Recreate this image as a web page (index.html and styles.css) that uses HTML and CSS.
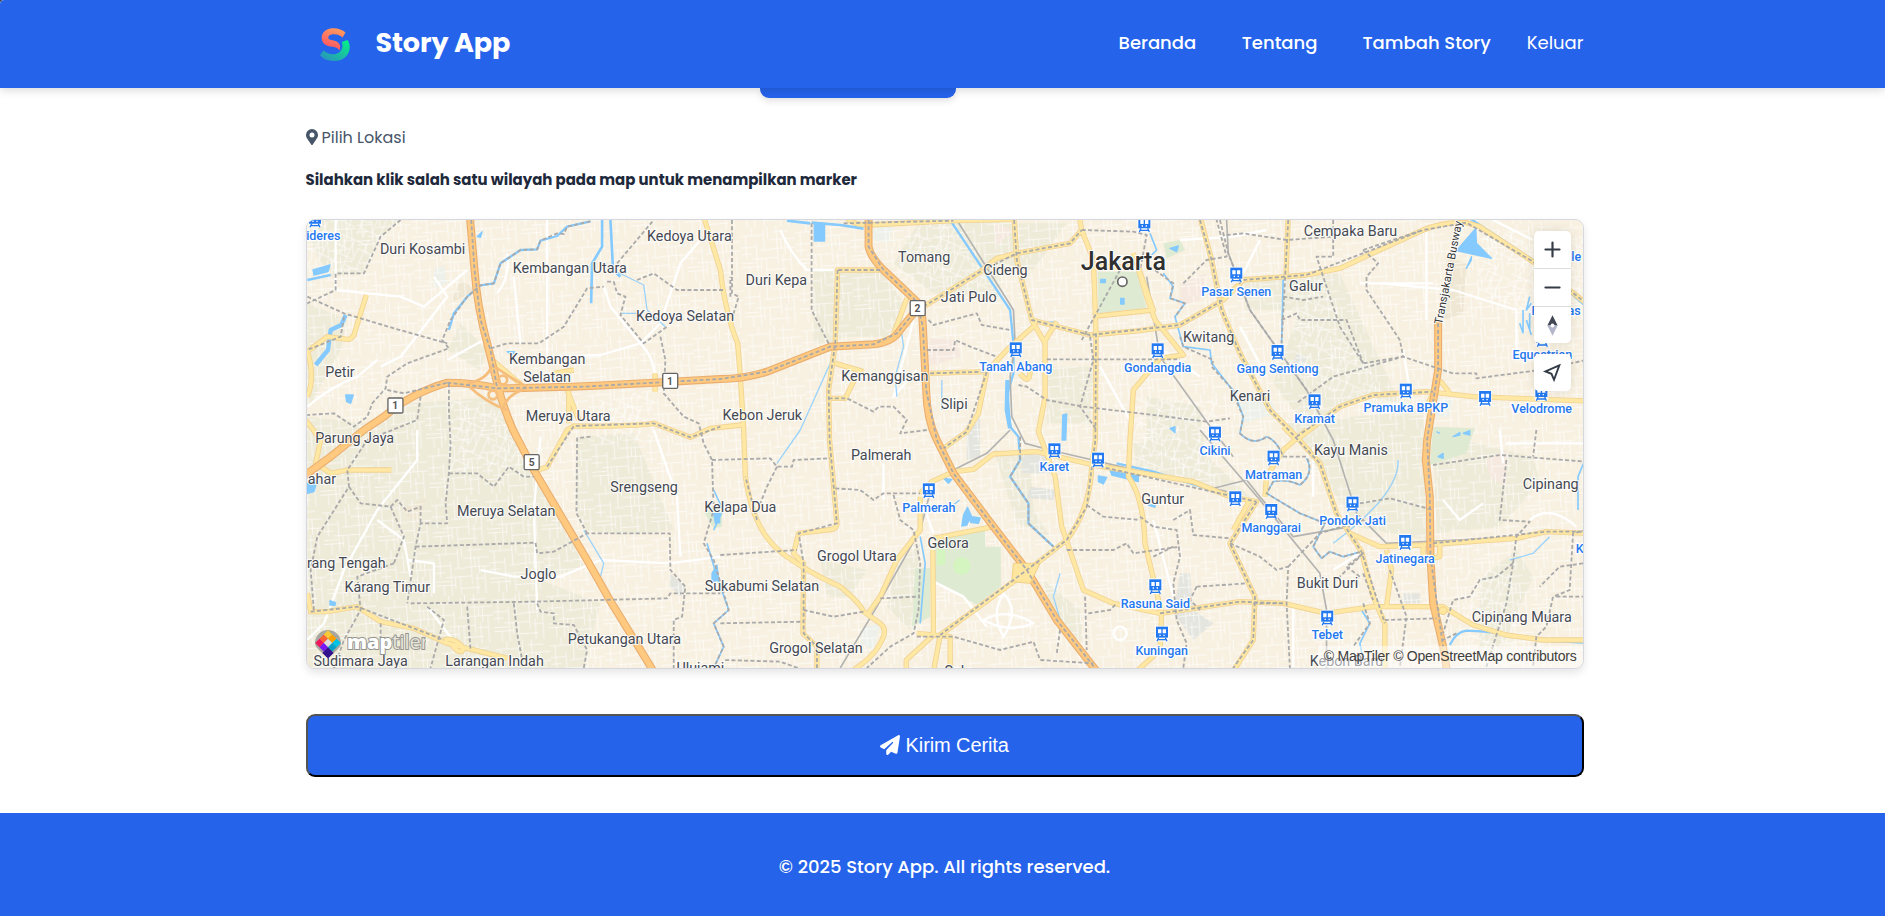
FILE: index.html
```html
<!DOCTYPE html>
<html lang="id">
<head>
<meta charset="utf-8">
<title>Story App</title>
<link rel="stylesheet" href="styles.css">
</head>
<body>
<header class="header">
  <div class="container header-inner">
    <a class="brand">
      <svg class="brand-logo" viewBox="0 0 30 33">
        <defs>
          <linearGradient id="warm" x1="1" y1="0" x2=".6" y2="1"><stop offset="0" stop-color="#ffa35c"/><stop offset=".6" stop-color="#ff7562"/><stop offset="1" stop-color="#ff5660"/></linearGradient>
          <linearGradient id="cool" x1="0" y1="1" x2="1" y2="0"><stop offset="0" stop-color="#2a8cc4"/><stop offset=".6" stop-color="#16c79c"/><stop offset="1" stop-color="#00fa85"/></linearGradient>
        </defs>
        <path d="M25.500 4.500C20-1 6-2 2.200 6.500C0 14 5 17.500 11 18.500C16 19.200 18 20 19.500 22.500C22 15 17 13 11 12C6 10.500 8.500 6.300 13 6.200C17 6 20 7 22.500 9.500Z" fill="url(#warm)"/>
        <path d="M27.500 12C33 20 28 33 14 33C7 33 2 30 0 27L3.500 22.500C9 28 21 28 22.300 19C22.600 17 22.300 15 21.500 14Z" fill="url(#cool)"/>
      </svg>
      <span class="brand-name">Story App</span>
    </a>
    <nav class="nav">
      <a class="nav-link nav-beranda">Beranda</a>
      <a class="nav-link nav-tentang">Tentang</a>
      <a class="nav-link nav-tambah">Tambah Story</a>
      <a class="nav-link nav-logout">Keluar</a>
    </nav>
  </div>
</header>
<main class="container main">
  <div class="camera-button"></div>
  <div class="field-label">
    <svg class="pin-icon" viewBox="0 0 384 512"><path fill="currentColor" d="M172 502C27 291 0 270 0 192a192 192 0 1 1 384 0c0 78-27 99-172 310-9 14-31 14-40 0zm20-230a80 80 0 1 0 0-160 80 80 0 0 0 0 160z"/></svg>
    <span>Pilih Lokasi</span>
  </div>
  <p class="hint">Silahkan klik salah satu wilayah pada map untuk menampilkan marker</p>
  <div class="map">
    <svg class="map-canvas" viewBox="19 30 3831 1344" preserveAspectRatio="none">
      <defs>
        <pattern id="streets" width="210" height="190" patternUnits="userSpaceOnUse" patternTransform="rotate(-4) scale(.78)">
          <path class="street" d="M0 30H90M90 12V88M20 30V120M0 75H60M60 60V190M40 120H140M110 50H210M140 0V150M170 50V110M115 85H210M190 85V190M0 150H75M95 120V190M95 165H170M30 150V190M125 20H185M160 110V190M0 100H40M75 88H115M0 135H55M150 130H188M105 0V45M45 0V30M75 120V165M155 50V85"/>
        </pattern>
        <pattern id="streets-b" width="170" height="150" patternUnits="userSpaceOnUse" patternTransform="rotate(24) scale(.8)">
          <path class="street" d="M0 20H110M30 0V90M60 20V150M0 60H60M85 45H170M110 0V120M85 45V90M0 90H85M140 45V150M60 120H170M20 90V150M0 125H40M85 120V150"/>
        </pattern>
        <g id="train">
          <rect x="-21" y="-23" width="42" height="48" rx="6" fill="#fff" opacity=".75"/>
          <path d="M-18-20H18V13H-18Z" fill="#2379f1"/><path d="M-12-12H-2V0H-12ZM2-12H12V0H2Z" fill="#fff"/><path d="M-8 6h4M4 6h4" stroke="#fff" stroke-width="4"/><path d="M-10 13-15 24M10 13 15 24M-13 19H13" stroke="#2379f1" stroke-width="4"/>
        </g>
        <g id="roads-major">
          <path d="M508 20L522 180Q530 290 560 400L590 520Q610 600 640 665L700 780L860 1050L925 1165L1060 1385"/>
          <path d="M10 798L90 740L190 660L250 620Q330 550 440 518Q520 518 590 535Q800 533 1060 518L1260 507Q1330 507 1400 485L1590 410L1720 403Q1780 395 1800 360L1850 298"/>
          <path d="M1705 20V110Q1710 140 1750 180L1850 275Q1868 300 1868 350L1878 540Q1880 630 1910 690L1960 790L2080 950L2180 1080L2270 1230L2390 1384"/>
          <path d="M3415 330V480L3382 690L3378 750L3390 860L3392 1040L3400 1180L3430 1310L3442 1384"/>
        </g>
        <g id="roads-minor">
          <path d="M197 255L160 375Q150 390 140 388L80 380L20 425Q45 500 20 560M15 630L60 690L45 760L90 790L140 780H272"/>
          <path d="M1210 20L1260 180Q1275 310 1312 400L1320 500L1330 660L1335 800Q1350 890 1370 930Q1400 1000 1460 1040Q1530 1090 1620 1130Q1680 1180 1690 1205L1740 1240Q1765 1260 1740 1300Q1720 1340 1660 1380"/>
          <path d="M575 450L660 522M800 540L835 630M805 540V640M1064 490V545M700 785L740 770L800 660L820 648Q990 650 1060 640L1170 682L1230 655L1325 645M760 490L820 480"/>
          <path d="M20 1150L30 1205H80L170 1190L240 1235L340 1255L440 1300L620 1345M430 1290Q460 1280 490 1315Q480 1340 450 1300"/>
          <path d="M1740 180H1612L1605 400L1585 540L1588 690L1610 940Q1610 960 1580 960L1495 970L1480 1030L1510 1060L1508 1270L1550 1310V1384"/>
          <path d="M1640 25Q1660 45 1710 45L1960 32L2150 28M1870 290L2040 185L2090 145L2150 130L2310 100L2345 60L2338 20M2345 60L2380 150L2388 370L2386 690L2375 770Q2370 900 2300 990L2140 1115L1920 1275L1900 1384"/>
          <path d="M2142 20L2150 150L2195 330L2235 400V560L2215 665L2265 800L2285 950L2350 1140L2440 1180L2580 1210L2820 1175L2950 1180L3080 1210L3220 1190H3430L3520 1245L3620 1275L3730 1290H3860"/>
          <path d="M2195 330L2370 375L2520 362L2640 345L2770 270L2830 210L3020 195L3120 175L3370 60Q3430 35 3500 38L3540 50L3700 155L3860 280"/>
          <path d="M2700 20L2735 150L2765 300L2820 430L2910 600L2990 680L3060 760L3110 910L3185 1025L3220 1160L3255 1240V1384M2965 20L2958 200"/>
          <path d="M2390 318L2560 300L2500 130M2500 130L2540 260L2565 330L2650 435L2580 445L2500 540L2490 690L2485 800Q2530 860 2535 1000L2585 1210L2580 1320L2510 1384M2390 170H2500"/>
          <path d="M2990 690L3120 590L3220 555L3380 545L3520 560L3860 573M3420 510L3450 550M3380 590L3400 550"/>
          <path d="M1860 860V960L1790 1050L1740 1160L1700 1215M1860 850L1895 815L1960 785L2020 778L2080 732L2210 725L2380 765L2680 815L2790 860L2870 875L2790 1000L2865 1160L2860 1290L2800 1384M2850 870L2800 960M2895 860L2900 800L2950 720L3020 660M2950 650L2990 690"/>
          <path d="M1900 985L2080 950M1898 1020L1900 1275L1818 1350V1384M1850 1270L1950 1280V1384M1890 490L2060 485L2120 420L2205 345M2060 485L2035 610L2000 665L1930 715M1820 265L1800 320L1780 370M1605 460L1690 485M1665 505L1635 565H1585M2230 400L2270 335M2160 490Q2190 530 2190 480"/>
          <path d="M3150 970L3240 1010L3370 1005L3650 985L3740 965L3860 970M3260 1020L3275 1080L3260 1190M3370 1010V1050L3420 1040V1000"/>
        </g>
      </defs>
      <rect x="0" y="0" width="3880" height="1400" fill="#f8f1e2"/>
      <g fill="#eeebd9">
        <path d="M20 30H300L240 80L190 190L90 200L40 120ZM20 280L140 330L120 420L20 600ZM440 420L480 340L560 420L540 480ZM1540 180H1650V370L1600 400H1540ZM2020 40H2300L2200 180L2050 150ZM1620 180H1740L1820 290L1760 380H1620ZM1860 30H2100V260L1900 250L1780 160ZM2240 470H2380L2370 640H2240ZM2820 200L3120 190L3300 580L3200 560L3010 640L2920 520L3000 300L2840 300Z"/>
        <path d="M20 620L190 640L330 580L590 560L690 780L770 900L850 1070L720 1110L900 1180L850 1374H20ZM830 680L1000 670L1120 960L970 975L860 960L825 900ZM2960 640L3370 600L3380 990L3170 950L3050 770ZM3400 670L3700 740L3720 820L3600 950L3410 970ZM2080 720L2190 730L2200 900L2250 980L2150 940ZM2500 700L2680 700L2850 860L2700 830L2510 780ZM2540 560L2700 590L2720 780L2540 780ZM1560 1050L1700 1080L1650 1160H1580ZM1860 1000L1790 1070L1760 1190L1830 1260ZM2230 1110L2340 1200L2350 1300L2260 1240ZM3540 1110L3650 1020L3700 1100L3600 1330H3540Z"/>
      </g>
      <g fill="#efe7d3"><path d="M480 210L530 240L450 280ZM3440 140L3500 160L3490 310L3430 330ZM300 900L380 860L350 940Z"/></g>
      <g fill="#f6e9df"><path d="M1890 385L1970 390L1980 440L1880 470ZM2080 40L2140 60L2090 110ZM2640 220L2720 190L2700 270L2640 290ZM3560 750L3620 720L3620 830L3570 800Z"/></g>
      <g fill="#e5e5df"><path d="M2000 640L2040 620L2040 740L2000 750ZM2165 730L2250 720L2250 790L2165 790ZM2190 830L2270 840L2260 870L2180 865ZM2640 1090H2670L2680 1200L2740 1240L2680 1290L2620 1210ZM3310 1150H3360V1180H3310ZM1108 1090L1155 1130L1140 1160L1110 1130ZM2990 430L3020 440L3010 470L2980 460Z"/></g>
      <g fill="#edf1e9"><path d="M400 180L430 165L440 220L400 235ZM1715 50L1780 48L1765 97L1715 90ZM1690 1250L1740 1240L1720 1320L1680 1300ZM2820 580L2910 560L2930 610L2830 640ZM3390 565L3460 570L3450 620H3390Z"/></g>
      <rect x="0" y="0" width="3880" height="1400" fill="url(#streets)"/>
      <path fill="url(#streets-b)" d="M20 30H300L180 190H20ZM450 570L600 600L690 780L440 790ZM1860 30H1960L2090 240L1780 200ZM2950 200H3060L3300 640L3000 500ZM2500 560H2750V800H2500ZM3550 60H3850V330L3530 290ZM900 560L1060 540V700L860 700ZM3500 1080H3650V1370H3500Z"/>
      <g class="green">
        <path d="M2392 185H2510L2540 295L2395 310ZM3400 650L3525 655L3500 730L3390 765ZM2590 100L2640 90L2655 120L2600 145ZM1905 990L2055 960V1010H2102V1130L2030 1185L1905 1115ZM1845 1075H1890V1220L1835 1250ZM1210 905L1265 890V950L1240 955Z"/>
      </g>
      <circle cx="1985" cy="1068" r="26" fill="#d4f5c0"/><path d="M1910 1018H1935V1065H1910Z" fill="#d4f5c0"/>
      <g class="local">
        <path d="M105 30V240L300 260L370 290L500 180M400 200L440 260L300 440L240 470M440 450L540 395L580 410M20 590Q90 530 170 500L230 450M640 200L660 400M740 30V440M740 440L900 435L1020 400L1080 340L1140 160L1200 90M1020 400Q1060 440 1064 500M910 230L930 290L1020 400M590 250Q630 200 620 130"/>
        <path d="M350 660V750L230 900L130 1080L70 1240L20 1290M230 930L310 990L330 1100M540 1080L640 1100L780 1100L900 1050L1110 1060L1260 1040M720 680L700 900L710 1200M1060 660L1130 860L1140 1040M320 1050L400 1060V1150M380 1190L480 1320M1440 60Q1470 130 1520 180H1600M1840 330L1780 560L1850 480M1750 760V870M1860 860L1900 970"/>
        <path d="M1900 1115L1990 1160L2060 1250M2050 1230Q2120 1190 2200 1240Q2120 1270 2050 1230M2110 1150Q2160 1200 2110 1280Q2070 1210 2110 1150M2440 1270a20 20 0 1 0 40 0a20 20 0 1 0-40 0M2640 90L2800 80L2900 60M2830 190L2880 90M3240 220L3460 240L3650 300V420M3310 420L3330 540M3180 220H3400M3380 60V330M3600 660L3610 760M2400 470L2500 650M2560 400L2700 500M2820 350L2900 500M3580 30L3700 90M3620 700H3850M3690 930Q3750 880 3830 950M3040 710V860M2560 930L2620 1160M2980 1180V1370M3100 1080L3180 1030M3430 870L3480 930L3550 880"/>
      </g>
      <g class="water-line">
        <path d="M870 34L800 50L770 78L720 92L710 118L660 120L600 160L580 220L540 226L500 260L460 310L445 360M20 210L90 195" />
        <path d="M905 30V110L875 160L872 280M930 30L938 180L960 200M1460 32L1530 40M1534 38L1620 45L1690 56" stroke-width="8"/>
        <path d="M938 180L1030 225L1040 300L1095 350M960 310H1010M850 960L910 1060L900 1100M1590 460L1500 660L1430 760M1820 265L1800 340L1810 410L1785 500L1790 560M1925 510V600M3630 1050L3700 1030L3750 980M2280 1090L2260 1160L2280 1230M2270 335L2200 340M3100 1000Q3300 850 3295 750" class="creek"/>
        <path d="M135 315L122 345L90 360L82 420L45 465" class="canal"/>
        <path d="M1950 30L2130 300L2140 400L2140 490L2122 550L2130 650L2155 680L2160 750L2130 800L2185 880V940L2260 1010"/>
        <path d="M2122 510L2120 600L2130 655" class="canal"/>
        <path d="M2550 70L2570 120L2540 150M2590 190L2620 230L2610 265L2655 280L2625 320L2650 410L2730 420L2735 460L2790 530L2800 540L2830 620L2820 670Q2860 710 2900 680Q2930 690 2950 740M3020 745Q3045 790 3000 825Q2960 805 2920 815L2900 850L3000 910L3075 940L3040 1010L3065 1045L3090 1025L3130 1040L3185 1025M3185 1200L3210 1240L3180 1300L3190 1350M2950 200L2945 400M1240 840L1268 900L1240 960M1220 1000L1250 1100L1285 1200L1240 1240L1270 1310L1240 1374M1860 980L1875 1060L1860 1240M3860 740L3835 800V900" class="stream"/>
        <path d="M3450 1305Q3470 1265 3500 1262Q3590 1265 3660 1280L3730 1292L3860 1298M3510 25L3700 150L3860 290M2450 760L2560 785L2780 855"/>
        <path d="M3690 260L3680 300L3695 280M3670 300V370M3680 330L3695 375M3690 310V360M3660 340L3670 370" class="stream"/>
      </g>
      <g class="water">
        <path d="M1542 40H1573V93H1542ZM37 180L88 165L82 185L40 195ZM135 555H158L150 580L138 575ZM530 80L545 65L540 82ZM20 820L50 810L40 845L20 850ZM88 1172L105 1178L103 1186L88 1185ZM620 425H642L635 435ZM1235 1090L1250 1065L1255 1110L1235 1115ZM1240 910H1258V938L1245 940Z"/>
        <path d="M2002 892L2015 920L2040 924L2035 940L2012 938L2010 925L2000 945L1985 948L1990 915ZM1930 805L1955 808L1945 820ZM1960 885L1978 870M2430 780L2515 798V815L2435 795ZM2395 798L2420 802L2410 822L2395 815ZM2288 615L2300 612L2297 690H2286ZM2402 208H2416V218H2402ZM2462 265H2472V282H2462ZM2610 115L2635 108L2630 125ZM3528 55L3530 100L3575 145L3470 122ZM3500 175L3515 140V150ZM2610 655L2625 650V668ZM3460 680L3480 668V675ZM3490 670L3510 662V675ZM3410 665L3420 670M3415 740L3430 730V745ZM2545 885H2565V892Z"/>
      </g>
      <g class="rail">
        <path d="M1970 30L2140 300L2145 400L2130 500L2135 620L2175 700L2250 720L2780 845M2700 660L2880 870L3060 1090L3080 1200V1374M2130 660L2060 730L1900 810L1860 960L1730 1190L1620 1374M2780 30L2785 130L2850 300L3020 540L3100 690L3170 910L3260 1000L3650 982M2540 200L2580 440L2720 635L2800 740M2720 840L2840 810L2880 860L2980 980L3150 950"/>
      </g>
      <use href="#roads-minor" class="minor-case"/><use href="#roads-minor" class="minor-fill"/>
      <use href="#roads-major" class="major-case"/><use href="#roads-major" class="major-fill"/>
      <g class="ramps"><path d="M500 520Q560 510 575 465M500 525Q560 580 620 600M575 465Q640 510 680 530M605 600Q620 550 680 535"/><circle cx="607" cy="510" r="13"/><circle cx="577" cy="555" r="13"/></g>
      <path d="M2140 1060H2220L2190 1120L2135 1115ZM3430 1190a12 12 0 1 0 .1 0" fill="#ffe69f" stroke="#f0cf84" stroke-width="3"/>
      <g class="boundary">
        <path d="M300 30L240 80L190 190H105V240L20 280M20 260L130 310L280 355L440 400M870 34L800 50L790 72L770 70L720 92L710 118L660 120L600 160L580 220L540 226L500 260L450 330L425 390L445 415L320 460L260 500L255 535L215 580L200 620L160 650L100 610L20 615M130 320L120 380L20 420"/>
        <path d="M260 540L310 550L440 518M445 520V600L450 700L445 790L435 880L440 940H360L345 1010L320 1180M360 560L350 630L200 690L140 780L145 830L50 980L30 1080L40 1205M145 830L180 880L270 890L290 870L320 905L360 890V940M270 890L310 980L280 1060M445 790L530 790L580 830L625 770L670 800H700M570 415L620 400H715L790 350L860 235L910 230M920 215L940 215L950 250L975 260L960 315L1030 400L1100 350M950 160L1060 30M1010 210L1060 190L1130 240L1270 240M1290 260V200M1080 380L1095 450L1090 550L1150 620L1195 640L1210 700L1235 750L1240 900L1210 1000L1240 1050L1285 1200L1240 1240L1270 1310L1240 1374"/>
        <path d="M345 1010L705 998L710 1030L760 1025L860 970H1108L1110 1080L1155 1130L1145 1220L1120 1230V1374M330 1180L700 1175L900 1170L1100 1165L1110 1150H1260M870 680L830 685L828 910L860 970M380 1190L430 1230L390 1374M500 1190L510 1320M640 1180L650 1270L665 1350M710 1180L720 1205L760 1210V1240L820 1245L860 1320L850 1374M280 1060L170 1100L180 1200L130 1290L100 1374M240 1240V1300"/>
        <path d="M1295 30V250L1315 260L1300 310H1270M1534 40V300L1590 410M1235 750L1410 745L1430 770H1475L1480 750L1590 745M1430 770L1400 830L1380 880M1260 1035L1490 1020M1605 835L1680 840L1720 870L1750 850L1860 850M1510 1200L1600 1220L1690 1205M1260 1240L1510 1235M1510 1380L1440 1355L1270 1350M1585 565H1640L1720 605L1735 590L1780 590L1820 630L1800 670L1880 660M1885 330L1900 345L2030 310L2045 345L2130 360M1880 420H1960L1965 390L2010 410L2090 440M1780 855L1800 930L1840 960L1860 1060L1855 1200L1840 1270L1770 1310L1700 1374M1740 1165L1850 1160M1850 1280L1960 1280L2100 1320L2200 1295L2220 1350L2380 1360M2280 1260L2270 1330M2355 1160L2360 1320M2365 1210L2430 1200L2450 1180M2155 525L2180 530L2240 570L2350 590L2520 610M2370 380L2380 450L2340 590L2390 660M2240 448H2640M2360 885L2410 920L2520 930M2300 1020H2440L2480 1000L2500 1030L2640 1010M2460 180L2345 390M2345 60L2500 65L2540 75L2520 180M2650 220L2720 150L2780 140L2750 30M2780 75L2830 70L2960 90L3100 80M2550 170L2620 220L2610 265L2655 280L2625 320"/>
        <path d="M2160 680V750L2130 800L2185 880V940L2260 1010M2640 380L2650 410L2740 450L2735 470L2790 530L2830 620L2820 670Q2860 710 2900 680Q2930 690 2950 740H3020Q3045 790 3000 825Q2960 805 2920 815L2900 850L3000 910L3075 940L3040 1010L3065 1045L3090 1025L3130 1040L3185 1025M3190 1180L3210 1240L3160 1310"/>
        <path d="M2760 30L2785 130L2850 300L3020 540M3100 30V140H3050L3120 350L3190 460L3310 440L3460 490L3530 490V505L3720 480L3860 450M2950 260L3010 270L3070 260M2945 330L2990 310L3000 330H3140L3190 460M3190 120L3235 160L3200 200V240L3300 390L3310 440L3100 500L2990 580M3190 120L3370 60M2520 610L2720 635L2790 625M3180 880L3270 865L3400 900M3400 765L3600 735L3860 755M3710 660L3700 740M3620 750L3600 930L3690 935L3650 980L3640 1060L3620 1180L3560 1370M3860 960L3820 970L3810 1140L3760 1160L3740 1250L3710 1280L3700 1370M3770 1160H3850M3640 1060L3590 1100L3540 1110L3510 1160L3460 1170L3430 1270M3850 1060L3780 1070L3720 1130"/>
        <path d="M2520 920L2560 950L2630 960L2640 1040L2620 1120L2630 1230L2660 1300L2650 1374M2620 930L2670 900L2680 975L2790 985M2560 1040L2620 1010M2790 1000L2880 1040L2930 1080L2965 1070L2960 1180L2970 1374M2965 1070L3060 970L3190 930M2690 1130L2840 1120M2690 1130L2670 1170L2700 1200M2860 1180H2950M3180 1100L3140 1070L3190 1030L3120 1100M3190 1090L3220 1170M3270 1080L3320 1220L3300 1374M3255 1230L3410 1225M3470 1270L3430 1290"/>
        <path d="M512 30L522 180L540 330L570 420L590 535L850 530L1060 518L1260 507L1400 485L1590 410L1720 403L1790 370L1850 298M440 518L590 535M1705 30V110L1750 180L1850 275L1868 350L1878 540L1910 690L1960 790L2080 950L2180 1080L2270 1230L2385 1374M1370 930L1335 800M1612 180L1605 400L1585 540L1588 690L1610 940L1495 970L1510 1060V1270L1550 1310V1374M1740 180H1612M1630 40L1960 32M1870 290L2040 185L2150 130L2310 100L2345 60M2142 30L2150 150L2195 330L2370 375L2640 345L2770 270M2388 370L2386 690L2360 890L2300 990L1920 1275M1890 490L2060 485L2000 665L1930 715M2700 30L2735 150L2765 300L2820 430L2910 600L3060 760L3110 910L3185 1025L3255 1240M2830 210L3020 195L3370 60L3500 38L3700 155L3860 280M3415 340V480L3382 690L3390 860L3392 1040L3430 1310M2990 680L3120 590L3220 555L3400 545M2965 30L2945 400M740 770L820 648L1060 640L1170 682L1260 650M2870 875L2790 1000L2865 1160L2860 1290L2800 1374M30 1205L170 1190L340 1255L430 1290M2380 765L2870 875M3400 1000L3740 965H3860M2580 1210L2820 1175L2950 1180"/>
      </g>
      <g class="shield">
        <rect x="262" y="564" width="45" height="45" rx="4"/><rect x="1087" y="490" width="45" height="45" rx="4"/><rect x="671" y="734" width="45" height="45" rx="4"/><rect x="1830" y="272" width="45" height="45" rx="4"/>
      </g>
      <g class="shield-num"><text x="284" y="598">1</text><text x="1109" y="524">1</text><text x="694" y="768">5</text><text x="1852" y="306">2</text></g>
      <g class="place">
        <text x="366" y="131">Duri Kosambi</text><text x="808" y="188">Kembangan Utara</text><text x="1167" y="94">Kedoya Utara</text><text x="1154" y="334">Kedoya Selatan</text><text x="740" y="463">Kembangan</text><text x="740" y="516">Selatan</text><text x="118" y="501">Petir</text><text x="803" y="634">Meruya Utara</text><text x="162" y="700">Parung Jaya</text><text x="64" y="823">ahar</text><text x="617" y="919">Meruya Selatan</text><text x="1031" y="845">Srengseng</text><text x="1320" y="905">Kelapa Dua</text><text x="137" y="1073">rang Tengah</text><text x="260" y="1146">Karang Timur</text><text x="714" y="1108">Joglo</text><text x="1385" y="1143">Sukabumi Selatan</text><text x="972" y="1303">Petukangan Utara</text><text x="180" y="1368">Sudimara Jaya</text><text x="582" y="1368">Larangan Indah</text><text x="1200" y="1389">Ulujami</text>
        <text x="1872" y="156">Tomang</text><text x="1428" y="225">Duri Kepa</text><text x="2116" y="196">Cideng</text><text x="2006" y="276">Jati Pulo</text><text x="1754" y="512">Kemanggisan</text><text x="1962" y="597">Slipi</text><text x="1386" y="631">Kebon Jeruk</text><text x="1743" y="750">Palmerah</text><text x="1944" y="1013">Gelora</text><text x="1670" y="1053">Grogol Utara</text><text x="1547" y="1328">Grogol Selatan</text><text x="1975" y="1399">Selo</text>
        <text x="3152" y="78">Cempaka Baru</text><text x="3018" y="242">Galur</text><text x="2726" y="395">Kwitang</text><text x="2850" y="572">Kenari</text><text x="3153" y="735">Kayu Manis</text><text x="3753" y="838">Cipinang</text><text x="2588" y="881">Guntur</text><text x="3083" y="1134">Bukit Duri</text><text x="3666" y="1236">Cipinang Muara</text><text x="3140" y="1368">Kebon Baru</text>
      </g>
      <text class="road-name" transform="translate(3427 344) rotate(-79)">Transjakarta Busway Koridor</text>
      <g>
        <use href="#train" x="43" y="28"/><use href="#train" x="2147" y="417"/><use href="#train" x="2263" y="720"/><use href="#train" x="2394" y="748"/><use href="#train" x="1886" y="840"/><use href="#train" x="2573" y="420"/><use href="#train" x="2809" y="193"/><use href="#train" x="2933" y="425"/><use href="#train" x="3044" y="573"/><use href="#train" x="3318" y="541"/><use href="#train" x="3556" y="563"/><use href="#train" x="3725" y="548"/><use href="#train" x="3728" y="386"/><use href="#train" x="2745" y="670"/><use href="#train" x="2921" y="742"/><use href="#train" x="2806" y="864"/><use href="#train" x="2914" y="902"/><use href="#train" x="3158" y="880"/><use href="#train" x="3316" y="995"/><use href="#train" x="2566" y="1128"/><use href="#train" x="2586" y="1270"/><use href="#train" x="3082" y="1222"/><use href="#train" x="2533" y="42"/>
      </g>
      <g class="station">
        <text x="68" y="90">ideres</text><text x="2147" y="482">Tanah Abang</text><text x="2263" y="783">Karet</text><text x="1886" y="905">Palmerah</text><text x="2573" y="486">Gondangdia</text><text x="2809" y="258">Pasar Senen</text><text x="2933" y="490">Gang Sentiong</text><text x="3044" y="638">Kramat</text><text x="3318" y="607">Pramuka BPKP</text><text x="3726" y="608">Velodrome</text><text x="3728" y="447">Equestrian</text><text x="2745" y="735">Cikini</text><text x="2921" y="806">Matraman</text><text x="2914" y="966">Manggarai</text><text x="3158" y="945">Pondok Jati</text><text x="3316" y="1060">Jatinegara</text><text x="2566" y="1193">Rasuna Said</text><text x="2585" y="1334">Kuningan</text><text x="3082" y="1287">Tebet</text><text x="3840" y="1029">K</text><text x="3819" y="152">ule</text><text x="3769" y="315">Pulomas</text>
      </g>
      <circle cx="2467" cy="215" r="14" fill="#fff" stroke="#666" stroke-width="5"/>
      <text class="city" x="2470" y="180">Jakarta</text>
    </svg>
    <svg class="maptiler" viewBox="0 0 112 32">
      <path d="M14 1C21.500 1 27 7 27 14C27 20 18 24 14 29C10 24 1 20 1 14C1 7 6.500 1 14 1Z" fill="#777" opacity=".6"/>
      <g transform="translate(14 14) rotate(45)">
        <path d="M-9-9h6v6h-6z" fill="#fbc935"/><path d="M-3-9h6v6h-6z" fill="#fba100"/><path d="M3-9h6v6H3z" fill="#00c3e6"/><path d="M-9-3h6v6h-6z" fill="#ff6234"/><path d="M-3-3h6v6h-6z" fill="#ddd"/><path d="M3-3h6v6H3z" fill="#05a0c8"/><path d="M-9 3h6v6h-6z" fill="#f1175d"/><path d="M-3 3h6v6h-6z" fill="#7717f5"/><path d="M3 3h8v8H3z" fill="#32128e"/>
      </g>
      <text class="logo-text" x="33" y="20"><tspan class="logo-map">map</tspan><tspan class="logo-tiler">tiler</tspan></text>
    </svg>
    <div class="controls">
      <div class="control-group">
        <span class="control"><svg viewBox="0 0 29 29"><path d="M14.500 9v11M9 14.500h11" class="stroke"/></svg></span>
        <span class="control"><svg viewBox="0 0 29 29"><path d="M9 14.500h11" class="stroke"/></svg></span>
        <span class="control"><svg viewBox="0 0 29 29"><path d="M14.500 6.500 18.500 14.500H10.500Z" fill="#414753"/><path d="M14.500 22.500 18.500 14.500H10.500Z" fill="#b4b7cb"/><circle cx="14.500" cy="14.500" r="1.500" fill="#fff"/></svg></span>
      </div>
      <div class="control-group">
        <span class="control"><svg viewBox="0 0 29 29"><path d="M19.800 9 9 13.700 13.700 15.500 15.700 20.200Z" class="stroke arrow"/></svg></span>
      </div>
    </div>
    <div class="attribution">© MapTiler © OpenStreetMap contributors</div>
  </div>
  <button class="submit"><svg class="plane-icon" viewBox="0 0 512 512"><path fill="currentColor" d="M498 6c10 7 15 18 13 31l-64 416c-3 20-24 32-43 24l-120-50-68 74c-18 19-56 9-56-22v-84c0-4 1-8 4-11L332 202c6-6 6-15 1-20-6-6-15-6-21-1L108 362 20 318c-11-5-19-16-20-29 0-12 6-23 16-29L464 4c11-6 24-5 34 2z"/></svg> Kirim Cerita</button>
</main>
<footer class="footer"><span class="footer-text">© 2025 Story App. All rights reserved.</span></footer>
</body>
</html>
```
FILE: styles.css
```css
* { box-sizing: border-box; }
html, body { margin: 0; }
html { background: #3b3b3b; }
body { height: 916px; overflow: hidden; background: #fff; color: #1e293b; font-family: Poppins, Inter, "Open Sans", sans-serif; display: flex; flex-direction: column; border-top-left-radius: 4px; }
.container { width: 1278px; margin-left: 305.500px; }
.header { position: relative; z-index: 2; height: 88px; flex: none; background: #2563eb; box-shadow: 0 2px 10px rgba(0,0,0,.16); color: #fff; border-top-left-radius: 4px; }
.header-inner { height: 88px; display: flex; align-items: center; justify-content: space-between; }
.brand { display: flex; align-items: center; padding-left: 14px; gap: 26px; }
.brand-logo { width: 30px; height: 33px; }
.brand-name { font-size: 27px; font-weight: 700; letter-spacing: -.1px; line-height: 36px; padding-bottom: 2px; }
.nav { display: flex; align-items: center; font-size: 18px; font-weight: 500; line-height: 28px; padding-bottom: 3px; }
.nav-beranda { margin-right: 45.500px; }
.nav-tentang { margin-right: 45px; }
.nav-tambah { margin-right: 36px; }
.nav-logout { font-weight: 400; }
.main { flex: none; }
.camera-button { width: 196px; height: 10px; margin-left: 454.500px; background: #2563eb; border-radius: 0 0 9px 9px; box-shadow: 0 3px 7px rgba(0,0,0,.12); }
.field-label { display: flex; align-items: center; gap: 4px; height: 24px; margin-top: 27px; color: #475569; font-size: 16px; white-space: nowrap; }
.pin-icon { width: 12px; height: 16px; }
.hint { margin: 19px 0 0; height: 24px; font-size: 14.940px; line-height: 24px; font-weight: 700; color: #1e293b; white-space: nowrap; }
.map { position: relative; height: 450px; margin-top: 27px; border: 1px solid #d5d9df; border-radius: 9px; overflow: hidden; box-shadow: 0 4px 8px rgba(0,0,0,.1); background: #f8f1e3; }
.map-canvas { display: block; width: 100%; height: 448px; font-family: Roboto, sans-serif; }
.map-canvas path { stroke-linejoin: round; }
.street { fill: none; stroke: #fff; stroke-width: 3.500; opacity: .7; }
.local { fill: none; stroke: #fff; stroke-width: 7; }
.green { fill: #dfead2; }
.water { fill: #84caff; stroke: #84caff; stroke-width: 4; }
.water-line { fill: none; stroke: #84caff; stroke-width: 7; }
.creek { stroke-width: 4; opacity: .8; }
.stream { stroke-width: 5; }
.canal { stroke-width: 13; }
.rail { fill: none; stroke: #b3b3b1; stroke-width: 5; }
.minor-case { fill: none; stroke: #f1d293; stroke-width: 16; }
.minor-fill { fill: none; stroke: #ffe8a3; stroke-width: 11; }
.major-case { fill: none; stroke: #eaaf70; stroke-width: 24; }
.major-fill { fill: none; stroke: #ffca80; stroke-width: 17; }
.ramps { fill: none; stroke: #f5be7c; stroke-width: 8; }
.boundary { fill: none; stroke: #aaa; stroke-width: 5.500; stroke-dasharray: 12 7; }
.shield { fill: #fff; stroke: #666; stroke-width: 4; }
.shield-num { font-size: 31px; font-weight: 700; fill: #555; text-anchor: middle; }
.place { font-size: 43px; fill: #454952; text-anchor: middle; stroke: #fff; stroke-opacity: .85; stroke-width: 6px; paint-order: stroke; }
.station { font-size: 37.500px; font-weight: 500; fill: #2678ee; text-anchor: middle; stroke: #fff; stroke-width: 7px; paint-order: stroke; }
.road-name { font-size: 34px; fill: #333; stroke: #fff; stroke-width: 5px; paint-order: stroke; }
.city { font-size: 75px; font-weight: 500; fill: #303030; text-anchor: middle; stroke: #fff; stroke-width: 6px; paint-order: stroke; }
.maptiler { position: absolute; left: 7px; bottom: 7px; width: 112px; height: 32px; }
.logo-text { font-family: "Open Sans", sans-serif; font-size: 20px; stroke: #969691; stroke-width: 2px; paint-order: stroke; fill: #fff; }
.logo-map { font-weight: 800; }
.logo-tiler { font-weight: 400; fill: #e7e5da; }
.controls { position: absolute; top: 11px; right: 12px; display: flex; flex-direction: column; gap: 11px; }
.control-group { width: 37px; border-radius: 5px; overflow: hidden; background: #fff; box-shadow: 0 0 10px rgba(60,50,20,.14); }
.control { display: block; height: 37px; }
.control + .control { border-top: 1px solid #ddd; height: 37.500px; }
.control svg { display: block; width: 37px; height: 37px; }
.stroke { fill: none; stroke: #333b47; stroke-width: 1.700; stroke-linecap: round; }
.arrow { stroke-width: 1.500; }
.attribution { position: absolute; right: 0; bottom: 0; height: 22px; padding: 0 6px; background: rgba(255,255,255,.5); color: #404040; font: 14px/21px "Liberation Sans", sans-serif; letter-spacing: -.240px; white-space: nowrap; }
.submit { display: block; width: 100%; height: 63px; margin-top: 45px; padding: 0; border: 2px outset #000; border-radius: 9px; background: #2563eb; color: #fff; font: 20px "Liberation Sans", sans-serif; letter-spacing: -.1px; }
.plane-icon { width: 20px; height: 20px; vertical-align: -3px; }
.footer { height: 103px; margin-top: auto; flex: none; padding: 3px 0 0 4px; background: #2563eb; color: #fff; display: flex; align-items: center; justify-content: center; font-size: 18px; font-weight: 500; white-space: nowrap; }
```
